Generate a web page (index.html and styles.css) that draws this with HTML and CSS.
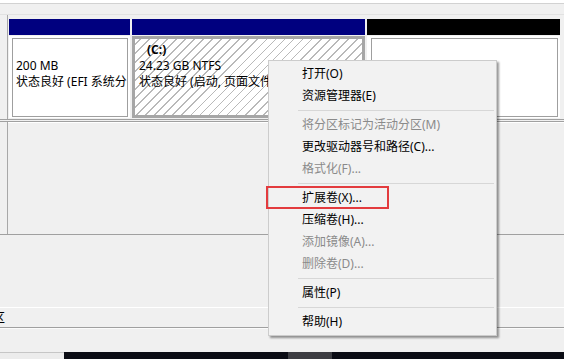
FILE: index.html
```html
<!DOCTYPE html>
<html lang="zh-CN">
<head>
<meta charset="utf-8">
<title>磁盘管理</title>
<link rel="stylesheet" href="styles.css">
</head>
<body>
<div class="top"></div>
<div class="gap1"></div>
<div class="disk d1">
  <div class="dlabel"></div>
  <div class="parts">
    <div class="part p1">
      <div class="bar"></div>
      <div class="box">
        <div class="inner">
          <div class="ln"></div>
          <div class="ln">200 MB</div>
          <div class="ln">状态良好 (EFI 系统分区)</div>
        </div>
      </div>
    </div>
    <div class="part p2">
      <div class="bar"></div>
      <div class="box">
        <div class="ln name">(C:)</div>
        <div class="ln">24.23 GB NTFS</div>
        <div class="ln">状态良好 (启动, 页面文件, 故障转储, 主分区)</div>
      </div>
    </div>
    <div class="part p3">
      <div class="bar black"></div>
      <div class="box">
        <div class="inner"></div>
      </div>
    </div>
  </div>
</div>
<div class="disk d2">
  <div class="dlabel"></div>
  <div class="fill"></div>
</div>
<div class="gap2"></div>
<div class="legend"><span class="lg">区</span></div>
<div class="gap3"></div>
<div class="taskbar">
  <div class="tb-left"></div>
  <div class="tb-dark"></div>
  <div class="tb-mid"></div>
  <div class="tb-dark grow"></div>
</div>

<div class="menu">
  <div class="item">打开(O)</div>
  <div class="item">资源管理器(E)</div>
  <div class="sep"></div>
  <div class="item dis">将分区标记为活动分区(M)</div>
  <div class="item">更改驱动器号和路径(C)...</div>
  <div class="item dis">格式化(F)...</div>
  <div class="sep"></div>
  <div class="item">扩展卷(X)...</div>
  <div class="item">压缩卷(H)...</div>
  <div class="item dis">添加镜像(A)...</div>
  <div class="item dis">删除卷(D)...</div>
  <div class="sep"></div>
  <div class="item">属性(P)</div>
  <div class="sep"></div>
  <div class="item">帮助(H)</div>
</div>
<div class="highlight"></div>
</body>
</html>
```
FILE: styles.css
```css
html, body {
  margin: 0;
  padding: 0;
}
body {
  width: 564px;
  height: 359px;
  overflow: hidden;
  background: #f0f0f0;
  font-family: "Noto Sans", "Noto Sans CJK SC", sans-serif;
  font-size: 12px;
  color: #000;
  position: relative;
}
.top {
  height: 3px;
  background: #fff;
  border-bottom: 1px solid #d2d2d2;
}
.gap1 {
  height: 10px;
}
.disk {
  display: flex;
}
.d1 {
  height: 104px;
  border-top: 1px solid #e2e2e2;
  border-bottom: 1px solid #a0a0a0;
}
.dlabel {
  width: 7px;
  border-right: 1px solid #a8a8a8;
  background: #f0f0f0;
}
.parts {
  display: flex;
  padding: 4px 0 0 1px;
  gap: 2px;
}
.part {
  display: flex;
  flex-direction: column;
}
.p1 { width: 121px; }
.p2 { width: 233px; }
.p3 { width: 193px; }
.bar {
  height: 16px;
  background: #00007f;
}
.bar.black {
  background: #000;
}
.box {
  height: 82px;
  margin-top: 1px;
  box-sizing: border-box;
  white-space: nowrap;
  overflow: hidden;
}
.p1 .box, .p3 .box {
  background: #fff;
  padding: 2px 2px 1px 3px;
}
.p3 .box {
  padding-left: 4px;
}
.inner {
  height: 100%;
  box-sizing: border-box;
  border: 1px solid #9f9f9f;
  padding: 3px 0 0 3px;
  overflow: hidden;
}
.p2 .box {
  border: 3px solid #a6a6a6;
  padding: 3px 0 0 4px;
  background: repeating-linear-gradient(-45deg, #ffffff 0 5.2px, #b9b9b9 5.2px 6.4px);
}
.ln {
  height: 16px;
  line-height: 16px;
}
.name {
  font-weight: bold;
  padding-left: 8px;
}
.d2 {
  margin-top: 1px;
  height: 112px;
  border-top: 1px solid #a0a0a0;
  border-bottom: 1px solid #a0a0a0;
}
.d2 .fill {
  flex: 1;
  border-top: 1px solid #fff;
}
.gap2 {
  height: 72px;
}
.legend {
  height: 19px;
  border-top: 1px solid #fff;
  border-bottom: 1px solid #a0a0a0;
  line-height: 19px;
  overflow: hidden;
}
.lg {
  display: inline-block;
  margin-left: -7px;
}
.gap3 {
  height: 23px;
  border-top: 1px solid #fbfbfb;
}
.taskbar {
  display: flex;
  height: 7px;
}
.tb-left {
  width: 64px;
  background: #ececec;
  border-top: 1px solid #c6c6c6;
}
.tb-dark {
  width: 224px;
  background: #0b0c14;
}
.tb-mid {
  width: 44px;
  background: #3d3d42;
}
.grow {
  flex: 1;
}
.menu {
  position: absolute;
  left: 268px;
  top: 60px;
  width: 229px;
  box-sizing: border-box;
  background: #f2f2f2;
  border: 1px solid #cccccc;
  padding: 2px 0;
  box-shadow: 2px 2px 2px rgba(0, 0, 0, 0.4);
}
.item {
  height: 22px;
  line-height: 22px;
  padding-left: 33px;
  white-space: nowrap;
}
.item.dis {
  color: #8a8a8a;
}
.sep {
  height: 1px;
  margin: 3px 2px 3px 29px;
  background: #d7d7d7;
}
.highlight {
  position: absolute;
  left: 266px;
  top: 186px;
  width: 123px;
  height: 23px;
  box-sizing: border-box;
  border: 2px solid #e33b3e;
}
```
